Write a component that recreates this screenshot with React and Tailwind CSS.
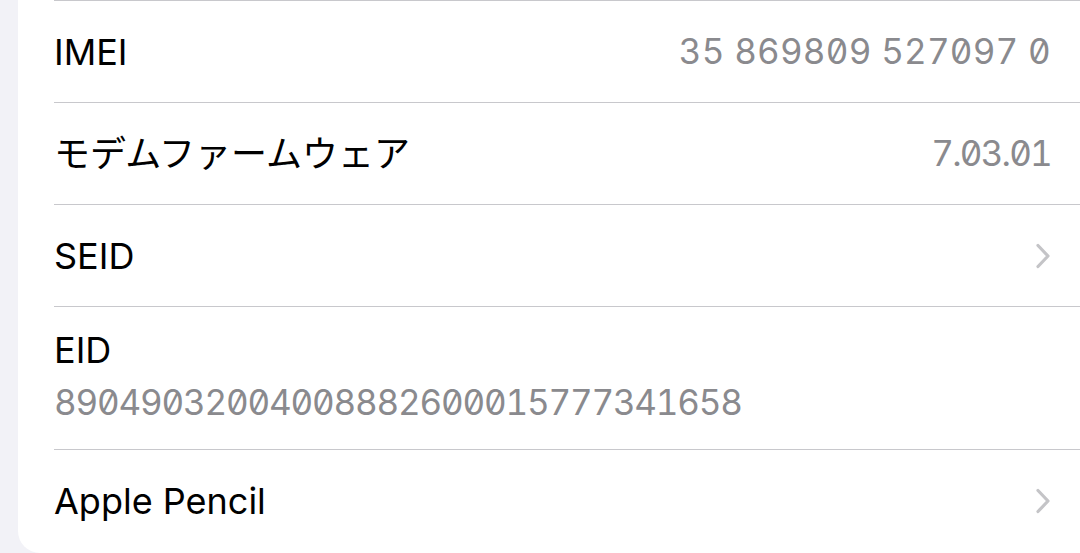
import React from "react";

const sans = { fontFamily: "Inter, 'Noto Sans CJK JP', sans-serif" };

function Chevron() {
  return (
    <svg width="16" height="26" viewBox="0 0 16 26" fill="none">
      <path d="M3 2.5 L13 13 L3 23.5" stroke="#c4c4c7" strokeWidth="3.2" strokeLinecap="round" strokeLinejoin="round" />
    </svg>
  );
}

function Row({ label, value, valueClass, chevron, last }) {
  return (
    <div className={"h-[102px] flex items-center justify-between pr-[29px] " + (last ? "" : "border-b border-[#c8c8cc]")}>
      <span className="text-[36px] text-black">{label}</span>
      {value && <span className={"text-[35px] text-[#8a8a8e] tabular-nums slashed-zero " + valueClass}>{value}</span>}
      {chevron && <Chevron />}
    </div>
  );
}

export default function App() {
  return (
    <div className="w-[1080px] h-[553px] bg-[#f2f2f7] overflow-hidden pl-[18px]" style={sans}>
      <div className="bg-white rounded-bl-[22px] pl-[36px] pb-[1px]">
        <div className="border-t border-[#c8c8cc]" />
        <Row label="IMEI" value="35 869809 527097 0" valueClass="tracking-[0.2px]" />
        <Row label="モデムファームウェア" value="7.03.01" valueClass="tracking-[-1.8px]" />
        <Row label="SEID" chevron />
        <div className="h-[143px] flex flex-col justify-center border-b border-[#c8c8cc] pb-[4px]">
          <span className="text-[36px] leading-[52px] text-black">EID</span>
          <span className="text-[35px] leading-[52px] text-[#8a8a8e] tabular-nums slashed-zero tracking-[-1.2px]">
            89049032004008882600015777341658
          </span>
        </div>
        <Row label="Apple Pencil" chevron last />
      </div>
    </div>
  );
}
